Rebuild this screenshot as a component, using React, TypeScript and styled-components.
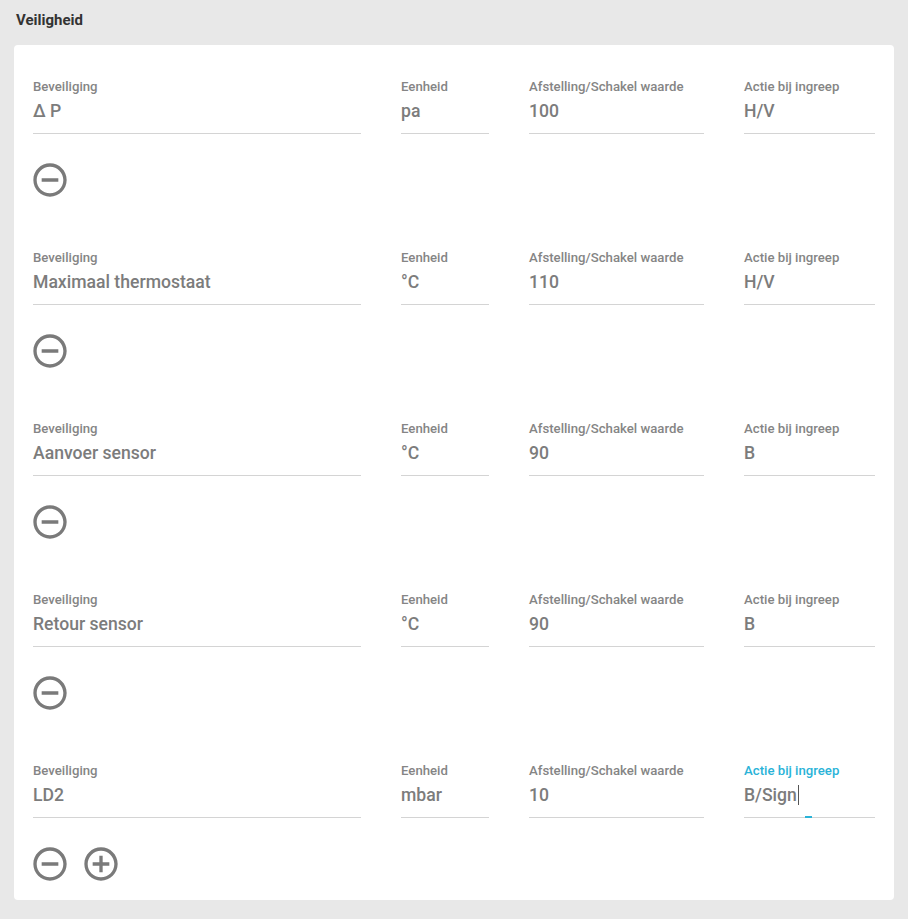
import React from 'react'
import styled, { createGlobalStyle } from 'styled-components'

type Row = { name: string; unit: string; value: string; action: string }

const rows: Row[] = [
  { name: '\u0394 P', unit: 'pa', value: '100', action: 'H/V' },
  { name: 'Maximaal thermostaat', unit: '°C', value: '110', action: 'H/V' },
  { name: 'Aanvoer sensor', unit: '°C', value: '90', action: 'B' },
  { name: 'Retour sensor', unit: '°C', value: '90', action: 'B' },
  { name: 'LD2', unit: 'mbar', value: '10', action: 'B/Sign' },
]

const MinusIcon = () => (
  <svg viewBox="0 0 24 24" width="40" height="40" fill="currentColor">
    <path d="M7 11v2h10v-2H7zm5-9C6.48 2 2 6.48 2 12s4.48 10 10 10 10-4.48 10-10S17.52 2 12 2zm0 18c-4.41 0-8-3.59-8-8s3.59-8 8-8 8 3.59 8 8-3.59 8-8 8z" />
  </svg>
)

const PlusIcon = () => (
  <svg viewBox="0 0 24 24" width="40" height="40" fill="currentColor">
    <path d="M13 7h-2v4H7v2h4v4h2v-4h4v-2h-4V7zm-1-5C6.48 2 2 6.48 2 12s4.48 10 10 10 10-4.48 10-10S17.52 2 12 2zm0 18c-4.41 0-8-3.59-8-8s3.59-8 8-8 8 3.59 8 8-3.59 8-8 8z" />
  </svg>
)

const App = () => {
  return (
    <Page>
      <GlobalStyle />
      <Title>Veiligheid</Title>
      <Card>
        {rows.map((r, i) => {
          const last = i === rows.length - 1
          return (
            <Block key={i} last={last}>
              <Fields>
                <Field width={328}>
                  <Label>Beveiliging</Label>
                  <Value>{r.name}</Value>
                </Field>
                <Field width={88}>
                  <Label>Eenheid</Label>
                  <Value>{r.unit}</Value>
                </Field>
                <Field width={175}>
                  <Label>Afstelling/Schakel waarde</Label>
                  <Value>{r.value}</Value>
                </Field>
                <Field width={131}>
                  <Label focused={last}>Actie bij ingreep</Label>
                  <Value>
                    {r.action}
                    {last && <Caret />}
                  </Value>
                  {last && <FocusBar />}
                </Field>
              </Fields>
              <Actions>
                <IconButton>
                  <MinusIcon />
                </IconButton>
                {last && (
                  <IconButton>
                    <PlusIcon />
                  </IconButton>
                )}
              </Actions>
            </Block>
          )
        })}
      </Card>
    </Page>
  )
}

export default App

const GlobalStyle = createGlobalStyle`
  html, body {
    margin: 0;
    padding: 0;
    background: #e8e8e8;
    font-family: Roboto, "Liberation Sans", sans-serif;
  }
`

const Page = styled.div`
  width: 908px;
  min-height: 919px;
  padding: 11px 14px 0;
  box-sizing: border-box;
`

const Title = styled.div`
  font-size: 15px;
  font-weight: 700;
  color: #333;
  line-height: 18px;
  padding-left: 2px;
  margin-bottom: 16px;
`

const Card = styled.div`
  background: #fff;
  border-radius: 4px;
  padding: 35px 19px 16px;
`

const Block = styled.div<{ last?: boolean }>`
  margin-bottom: ${(p) => (p.last ? '0' : '51px')};
`

const Fields = styled.div`
  display: flex;
  gap: 40px;
`

const Field = styled.div<{ width: number }>`
  position: relative;
  width: ${(p) => p.width}px;
  border-bottom: 1px solid #d4d4d4;
`

const Label = styled.div<{ focused?: boolean }>`
  font-size: 13.2px;
  font-weight: 500;
  line-height: 14px;
  color: ${(p) => (p.focused ? '#2ab3d8' : '#858585')};
  margin-bottom: 7px;
`

const Value = styled.div`
  font-size: 17.6px;
  font-weight: 500;
  line-height: 20px;
  color: #7c7c7c;
  padding-bottom: 12px;
  display: flex;
  align-items: center;
`

const Caret = styled.span`
  display: inline-block;
  width: 1px;
  height: 20px;
  background: #555;
  margin-left: 1px;
`

const FocusBar = styled.div`
  position: absolute;
  left: 61px;
  bottom: -1px;
  width: 7px;
  height: 2px;
  background: #2ab3d8;
`

const Actions = styled.div`
  display: flex;
  gap: 11px;
  margin: 26px 0 0 -3px;
`

const IconButton = styled.div`
  width: 40px;
  height: 40px;
  color: #7a7a7a;
  cursor: pointer;
  svg {
    display: block;
  }
`
